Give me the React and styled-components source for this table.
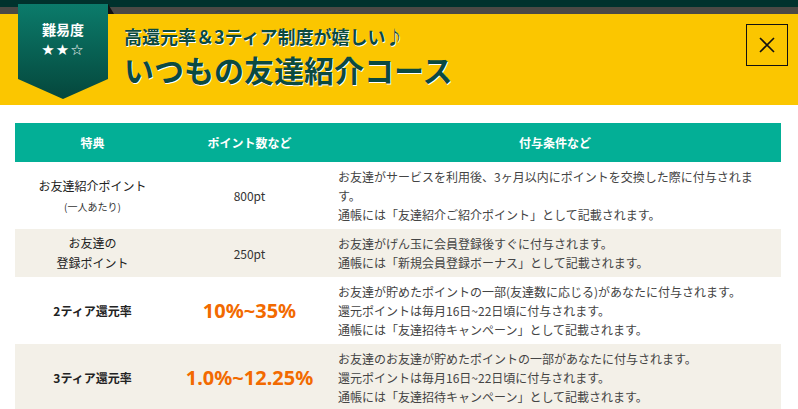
import React from 'react';
import styled, { createGlobalStyle } from 'styled-components';

const GlobalStyle = createGlobalStyle`
  body {
    margin: 0;
    background: #fff;
    font-family: 'Noto Sans CJK JP', 'Noto Sans', sans-serif;
  }
`;

const rows = [
  {
    label: ['お友達紹介ポイント'],
    note: '(一人あたり)',
    value: '800pt',
    lines: [
      'お友達がサービスを利用後、3ヶ月以内にポイントを交換した際に付与されます。',
      '通帳には「友達紹介ご紹介ポイント」として記載されます。',
    ],
  },
  {
    label: ['お友達の', '登録ポイント'],
    value: '250pt',
    shaded: true,
    lines: [
      'お友達がげん玉に会員登録後すぐに付与されます。',
      '通帳には「新規会員登録ボーナス」として記載されます。',
    ],
  },
  {
    label: ['2ティア還元率'],
    value: '10%~35%',
    strong: true,
    lines: [
      'お友達が貯めたポイントの一部(友達数に応じる)があなたに付与されます。',
      '還元ポイントは毎月16日~22日頃に付与されます。',
      '通帳には「友達招待キャンペーン」として記載されます。',
    ],
  },
  {
    label: ['3ティア還元率'],
    value: '1.0%~12.25%',
    strong: true,
    shaded: true,
    lines: [
      'お友達のお友達が貯めたポイントの一部があなたに付与されます。',
      '還元ポイントは毎月16日~22日頃に付与されます。',
      '通帳には「友達招待キャンペーン」として記載されます。',
    ],
  },
];

const App = () => (
  <Page>
    <GlobalStyle />
    <TopBand />
    <Header>
      <Badge>
        <BadgeShape />
        <Fold />
        <BadgeLabel>難易度</BadgeLabel>
        <Stars>★★☆</Stars>
      </Badge>
      <TitleBlock>
        <Subtitle>高還元率＆3ティア制度が嬉しい♪</Subtitle>
        <Title>いつもの友達紹介コース</Title>
      </TitleBlock>
      <CloseButton aria-label="close">
        <svg width="18" height="18" viewBox="0 0 18 18">
          <path d="M2 2 L16 16 M16 2 L2 16" stroke="#111" strokeWidth="1.6" fill="none" />
        </svg>
      </CloseButton>
    </Header>

    <Table>
      <HeadRow>
        <HeadCell>特典</HeadCell>
        <HeadCell>ポイント数など</HeadCell>
        <HeadCell>付与条件など</HeadCell>
      </HeadRow>
      {rows.map((row, idx) => (
        <Row key={idx} $shaded={row.shaded}>
          <LabelCell $strong={row.strong}>
            {row.label.map((l) => (
              <div key={l}>{l}</div>
            ))}
            {row.note && <Note>{row.note}</Note>}
          </LabelCell>
          <ValueCell $strong={row.strong}>{row.value}</ValueCell>
          <TextCell>
            {row.lines.map((l) => (
              <div key={l}>{l}</div>
            ))}
          </TextCell>
        </Row>
      ))}
    </Table>
  </Page>
);

export default App;

// Styled Components

const Page = styled.div`
  width: 798px;
  height: 409px;
  overflow: hidden;
`;

const TopBand = styled.div`
  height: 7px;
  background: #00322d;
  border-bottom: 7px solid #4b4945;
`;

const Header = styled.header`
  height: 91px;
  background: #fbc600;
  display: flex;
  align-items: flex-start;
  padding: 0 10px 0 18px;
`;

const Badge = styled.div`
  position: relative;
  width: 90px;
  height: 95px;
  margin-top: -10px;
  flex-shrink: 0;
  display: flex;
  flex-direction: column;
  align-items: center;
  color: #fff;
`;

const BadgeShape = styled.div`
  position: absolute;
  inset: 0;
  background: linear-gradient(#0b7b6b, #05473c);
  clip-path: polygon(0 0, 100% 0, 100% 79%, 50% 100%, 0 79%);
`;

const Fold = styled.div`
  position: absolute;
  top: 0;
  right: -6px;
  width: 0;
  height: 0;
  border-left: 6px solid #111;
  border-top: 10px solid transparent;
`;

const BadgeLabel = styled.div`
  margin-top: 16px;
  font-size: 14px;
  font-weight: 700;
  line-height: 18px;
  position: relative;
`;

const Stars = styled.div`
  margin-top: 4px;
  font-size: 15px;
  letter-spacing: 1px;
  line-height: 16px;
  font-family: 'DejaVu Sans', sans-serif;
  position: relative;
`;

const TitleBlock = styled.div`
  margin-left: 16px;
  flex: 1;
  color: #0b4a40;
  text-shadow: 1px 1px 0 #fff;
`;

const Subtitle = styled.div`
  margin-top: 10px;
  font-size: 18px;
  font-weight: 700;
  line-height: 24px;
`;

const Title = styled.div`
  margin-top: 1px;
  font-size: 30px;
  font-weight: 700;
  line-height: 40px;
`;

const CloseButton = styled.button`
  margin-top: 10px;
  width: 42px;
  height: 42px;
  border: 1.5px solid #111;
  background: transparent;
  padding: 0;
  display: flex;
  align-items: center;
  justify-content: center;
  cursor: pointer;
`;

const Table = styled.div`
  margin: 18px 17px 0 15px;
`;

const grid = `
  display: grid;
  grid-template-columns: 155px 159px 1fr;
`;

const HeadRow = styled.div`
  ${grid}
  height: 39px;
  background: #03af96;
`;

const HeadCell = styled.div`
  display: flex;
  align-items: center;
  justify-content: center;
  color: #fff;
  font-size: 12px;
  font-weight: 700;
`;

const Row = styled.div`
  ${grid}
  background: ${(p) => (p.$shaded ? '#f3f0e8' : '#fff')};
`;

const LabelCell = styled.div`
  display: flex;
  flex-direction: column;
  align-items: center;
  justify-content: center;
  text-align: center;
  font-size: 12px;
  line-height: 20px;
  color: #222;
  font-weight: ${(p) => (p.$strong ? 700 : 400)};
`;

const Note = styled.div`
  margin-top: 3px;
  font-size: 10px;
  line-height: 16px;
  color: #333;
`;

const ValueCell = styled.div`
  display: flex;
  align-items: center;
  justify-content: center;
  color: ${(p) => (p.$strong ? '#f26a00' : '#333')};
  font-size: ${(p) => (p.$strong ? '20px' : '12px')};
  font-weight: ${(p) => (p.$strong ? 700 : 400)};
  font-family: ${(p) => (p.$strong ? "'Noto Sans', sans-serif" : 'inherit')};
`;

const TextCell = styled.div`
  padding: 5px 24px 5px 9px;
  font-size: 12px;
  line-height: 19px;
  color: #444;
`;
